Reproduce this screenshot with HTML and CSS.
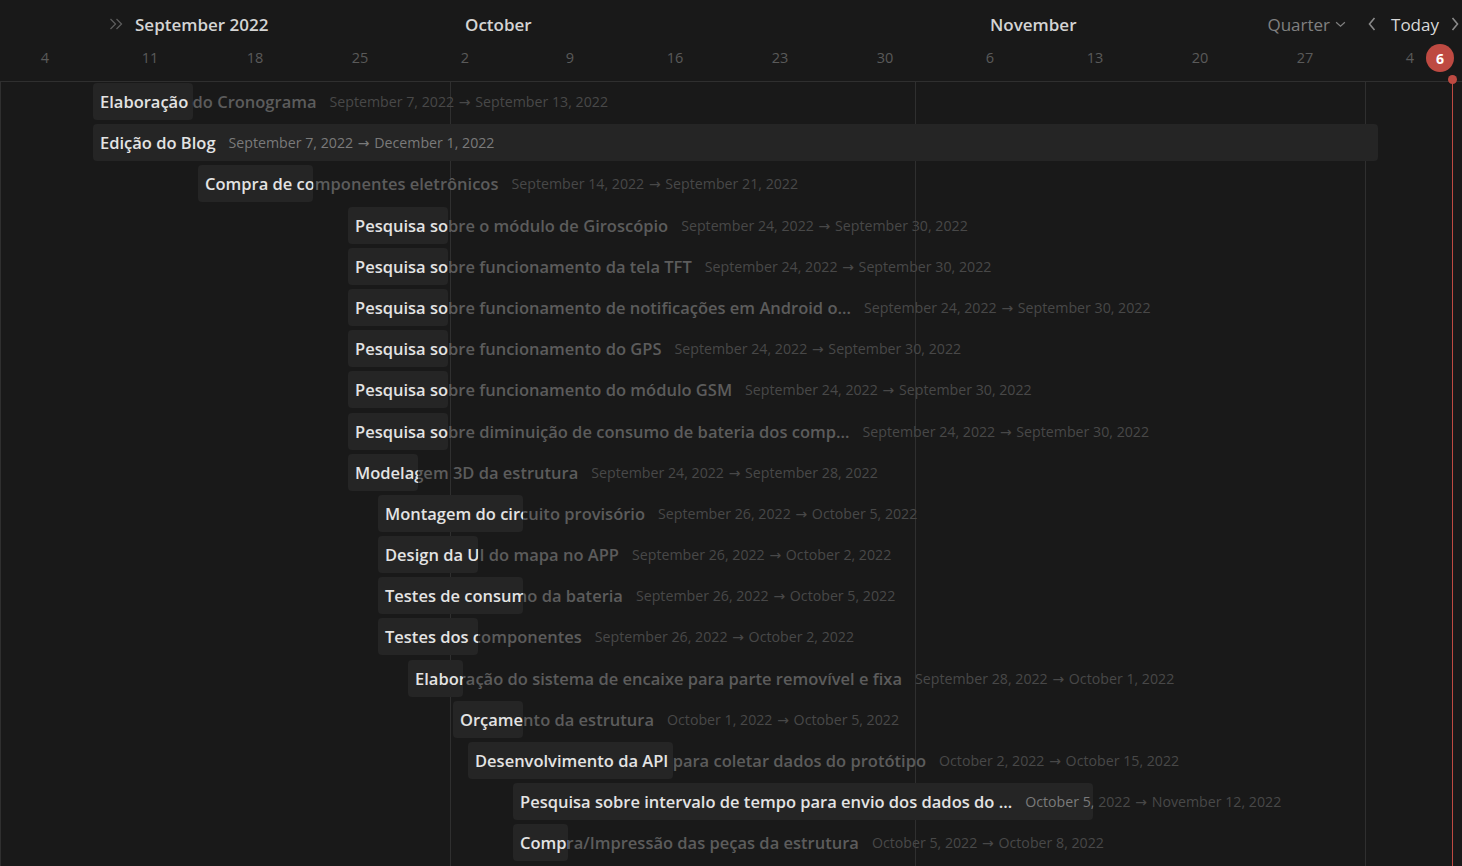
FILE: index.html
```html
<!DOCTYPE html>
<html lang="pt">
<head>
<meta charset="utf-8">
<title>Timeline</title>
<link rel="stylesheet" href="styles.css">
</head>
<body>
<div class="timeline">
  <div class="grid">
    <div class="month-col sep"></div>
    <div class="month-col oct"></div>
    <div class="month-col nov"></div>
    <div class="month-col dec"></div>
  </div>

  <header class="header">
    <div class="months">
      <div class="month m-sep">
        <svg class="dbl" viewBox="0 0 14 12" width="14" height="12"><path d="M1.5 1l5 5-5 5M7.5 1l5 5-5 5" fill="none" stroke="currentColor" stroke-width="1.3"/></svg>
        <span>September 2022</span>
      </div>
      <div class="month m-oct">October</div>
      <div class="month m-nov">November</div>
      <div class="controls">
        <span class="quarter">Quarter</span>
        <svg class="chev-down" viewBox="0 0 12 8" width="11" height="7"><path d="M1 1.5l5 4.5 5-4.5" fill="none" stroke="currentColor" stroke-width="1.4"/></svg>
        <svg class="nav prev" viewBox="0 0 8 14" width="8" height="14"><path d="M6.5 1L1.5 7l5 6" fill="none" stroke="currentColor" stroke-width="1.6"/></svg>
        <span class="today">Today</span>
        <svg class="nav next" viewBox="0 0 8 14" width="8" height="14"><path d="M1.5 1l5 6-5 6" fill="none" stroke="currentColor" stroke-width="1.6"/></svg>
      </div>
    </div>
    <div class="days">
      <span>4</span><span>11</span><span>18</span><span>25</span><span>2</span><span>9</span><span>16</span><span>23</span><span>30</span><span>6</span><span>13</span><span>20</span><span>27</span><span>4</span>
    </div>
    <div class="today-badge">6</div>
  </header>

  <div class="today-line"><span class="dot"></span></div>

  <div class="rows">
    <div class="row"><div class="item" style="margin-left:93px"><span class="title">Elaboração do Cronograma</span><span class="date">September 7, 2022 <span class="arrow">→</span> September 13, 2022</span><div class="bar" style="width:100px"><span class="title">Elaboração do Cronograma</span><span class="date">September 7, 2022 <span class="arrow">→</span> September 13, 2022</span></div></div></div>
    <div class="row"><div class="item" style="margin-left:93px"><span class="title">Edição do Blog</span><span class="date">September 7, 2022 <span class="arrow">→</span> December 1, 2022</span><div class="bar" style="width:1285px"><span class="title">Edição do Blog</span><span class="date">September 7, 2022 <span class="arrow">→</span> December 1, 2022</span></div></div></div>
    <div class="row"><div class="item" style="margin-left:198px"><span class="title">Compra de componentes eletrônicos</span><span class="date">September 14, 2022 <span class="arrow">→</span> September 21, 2022</span><div class="bar" style="width:115px"><span class="title">Compra de componentes eletrônicos</span><span class="date">September 14, 2022 <span class="arrow">→</span> September 21, 2022</span></div></div></div>
    <div class="row"><div class="item" style="margin-left:348px"><span class="title">Pesquisa sobre o módulo de Giroscópio</span><span class="date">September 24, 2022 <span class="arrow">→</span> September 30, 2022</span><div class="bar" style="width:100px"><span class="title">Pesquisa sobre o módulo de Giroscópio</span><span class="date">September 24, 2022 <span class="arrow">→</span> September 30, 2022</span></div></div></div>
    <div class="row"><div class="item" style="margin-left:348px"><span class="title">Pesquisa sobre funcionamento da tela TFT</span><span class="date">September 24, 2022 <span class="arrow">→</span> September 30, 2022</span><div class="bar" style="width:100px"><span class="title">Pesquisa sobre funcionamento da tela TFT</span><span class="date">September 24, 2022 <span class="arrow">→</span> September 30, 2022</span></div></div></div>
    <div class="row"><div class="item" style="margin-left:348px"><span class="title">Pesquisa sobre funcionamento de notificações em Android o…</span><span class="date">September 24, 2022 <span class="arrow">→</span> September 30, 2022</span><div class="bar" style="width:100px"><span class="title">Pesquisa sobre funcionamento de notificações em Android o…</span><span class="date">September 24, 2022 <span class="arrow">→</span> September 30, 2022</span></div></div></div>
    <div class="row"><div class="item" style="margin-left:348px"><span class="title">Pesquisa sobre funcionamento do GPS</span><span class="date">September 24, 2022 <span class="arrow">→</span> September 30, 2022</span><div class="bar" style="width:100px"><span class="title">Pesquisa sobre funcionamento do GPS</span><span class="date">September 24, 2022 <span class="arrow">→</span> September 30, 2022</span></div></div></div>
    <div class="row"><div class="item" style="margin-left:348px"><span class="title">Pesquisa sobre funcionamento do módulo GSM</span><span class="date">September 24, 2022 <span class="arrow">→</span> September 30, 2022</span><div class="bar" style="width:100px"><span class="title">Pesquisa sobre funcionamento do módulo GSM</span><span class="date">September 24, 2022 <span class="arrow">→</span> September 30, 2022</span></div></div></div>
    <div class="row"><div class="item" style="margin-left:348px"><span class="title">Pesquisa sobre diminuição de consumo de bateria dos comp…</span><span class="date">September 24, 2022 <span class="arrow">→</span> September 30, 2022</span><div class="bar" style="width:100px"><span class="title">Pesquisa sobre diminuição de consumo de bateria dos comp…</span><span class="date">September 24, 2022 <span class="arrow">→</span> September 30, 2022</span></div></div></div>
    <div class="row"><div class="item" style="margin-left:348px"><span class="title">Modelagem 3D da estrutura</span><span class="date">September 24, 2022 <span class="arrow">→</span> September 28, 2022</span><div class="bar" style="width:70px"><span class="title">Modelagem 3D da estrutura</span><span class="date">September 24, 2022 <span class="arrow">→</span> September 28, 2022</span></div></div></div>
    <div class="row"><div class="item" style="margin-left:378px"><span class="title">Montagem do circuito provisório</span><span class="date">September 26, 2022 <span class="arrow">→</span> October 5, 2022</span><div class="bar" style="width:145px"><span class="title">Montagem do circuito provisório</span><span class="date">September 26, 2022 <span class="arrow">→</span> October 5, 2022</span></div></div></div>
    <div class="row"><div class="item" style="margin-left:378px"><span class="title">Design da UI do mapa no APP</span><span class="date">September 26, 2022 <span class="arrow">→</span> October 2, 2022</span><div class="bar" style="width:100px"><span class="title">Design da UI do mapa no APP</span><span class="date">September 26, 2022 <span class="arrow">→</span> October 2, 2022</span></div></div></div>
    <div class="row"><div class="item" style="margin-left:378px"><span class="title">Testes de consumo da bateria</span><span class="date">September 26, 2022 <span class="arrow">→</span> October 5, 2022</span><div class="bar" style="width:145px"><span class="title">Testes de consumo da bateria</span><span class="date">September 26, 2022 <span class="arrow">→</span> October 5, 2022</span></div></div></div>
    <div class="row"><div class="item" style="margin-left:378px"><span class="title">Testes dos componentes</span><span class="date">September 26, 2022 <span class="arrow">→</span> October 2, 2022</span><div class="bar" style="width:100px"><span class="title">Testes dos componentes</span><span class="date">September 26, 2022 <span class="arrow">→</span> October 2, 2022</span></div></div></div>
    <div class="row"><div class="item" style="margin-left:408px"><span class="title">Elaboração do sistema de encaixe para parte removível e fixa</span><span class="date">September 28, 2022 <span class="arrow">→</span> October 1, 2022</span><div class="bar" style="width:55px"><span class="title">Elaboração do sistema de encaixe para parte removível e fixa</span><span class="date">September 28, 2022 <span class="arrow">→</span> October 1, 2022</span></div></div></div>
    <div class="row"><div class="item" style="margin-left:453px"><span class="title">Orçamento da estrutura</span><span class="date">October 1, 2022 <span class="arrow">→</span> October 5, 2022</span><div class="bar" style="width:70px"><span class="title">Orçamento da estrutura</span><span class="date">October 1, 2022 <span class="arrow">→</span> October 5, 2022</span></div></div></div>
    <div class="row"><div class="item" style="margin-left:468px"><span class="title">Desenvolvimento da API para coletar dados do protótipo</span><span class="date">October 2, 2022 <span class="arrow">→</span> October 15, 2022</span><div class="bar" style="width:205px"><span class="title">Desenvolvimento da API para coletar dados do protótipo</span><span class="date">October 2, 2022 <span class="arrow">→</span> October 15, 2022</span></div></div></div>
    <div class="row"><div class="item" style="margin-left:513px"><span class="title">Pesquisa sobre intervalo de tempo para envio dos dados do …</span><span class="date">October 5, 2022 <span class="arrow">→</span> November 12, 2022</span><div class="bar" style="width:580px"><span class="title">Pesquisa sobre intervalo de tempo para envio dos dados do …</span><span class="date">October 5, 2022 <span class="arrow">→</span> November 12, 2022</span></div></div></div>
    <div class="row"><div class="item" style="margin-left:513px"><span class="title">Compra/Impressão das peças da estrutura</span><span class="date">October 5, 2022 <span class="arrow">→</span> October 8, 2022</span><div class="bar" style="width:55px"><span class="title">Compra/Impressão das peças da estrutura</span><span class="date">October 5, 2022 <span class="arrow">→</span> October 8, 2022</span></div></div></div>
  </div>
</div>
</body>
</html>
```

FILE: styles.css
```css
* { box-sizing: border-box; }
html, body { margin: 0; padding: 0; background: #191919; }
body { font-family: "Open Sans", "Noto Sans", sans-serif; }

.timeline {
  position: relative;
  width: 1462px;
  height: 866px;
  overflow: hidden;
  background: #191919;
}

/* month grid lines */
.grid {
  position: absolute;
  top: 82px;
  left: 0;
  bottom: 0;
  display: flex;
}
.month-col { border-left: 1px solid #2f2f2f; height: 100%; }
.month-col.sep { width: 450px; }
.month-col.oct { width: 465px; }
.month-col.nov { width: 450px; }
.month-col.dec { width: 100px; }

.header {
  position: relative;
  height: 82px;
  border-bottom: 1px solid #2f2f2f;
}
.months {
  height: 48px;
  display: flex;
  align-items: center;
  color: #d4d4d4;
  font-size: 17px;
  font-weight: 600;
}
.month { white-space: nowrap; }
.m-sep { margin-left: 109px; width: 356px; display: flex; align-items: center; gap: 12px; }
.dbl { color: #5c5c5c; }
.m-oct { width: 525px; }
.m-nov { flex: 1; }
.controls {
  display: flex;
  align-items: center;
  font-weight: 400;
  margin-right: 3px;
}
.quarter { color: #808080; font-size: 17px; }
.chev-down { color: #808080; margin-left: 5px; margin-right: 22px; }
.nav { color: #8a8a8a; }
.today { color: #d8d8d8; font-size: 17px; margin: 0 12px 0 15px; }

.days {
  display: flex;
  margin-left: -7.5px;
  height: 18px;
  align-items: center;
  color: #5a5a5a;
  font-size: 14.5px;
}
.days span { width: 105px; flex: none; text-align: center; }

.today-badge {
  position: absolute;
  left: 1426px;
  top: 44px;
  width: 28px;
  height: 28px;
  border-radius: 50%;
  background: #be4a42;
  color: #fff;
  font-size: 14px;
  font-weight: 700;
  display: flex;
  align-items: center;
  justify-content: center;
}

.today-line {
  position: absolute;
  left: 1452px;
  top: 79px;
  bottom: 0;
  width: 1px;
  background: #be4a42;
}
.today-line .dot {
  position: absolute;
  left: -4px;
  top: -4px;
  width: 9px;
  height: 9px;
  border-radius: 50%;
  background: #be4a42;
}

.rows { position: relative; }
.row { height: 41.2px; padding-top: 1px; }
.item {
  position: relative;
  display: inline-flex;
  align-items: center;
  height: 37px;
  white-space: nowrap;
  padding-left: 7px;
}
.title {
  font-size: 16.5px;
  font-weight: 600;
  color: #5c5c5c;
}
.date {
  font-size: 14.2px;
  color: #484848;
  margin-left: 13px;
}
.arrow {
  font-family: "DejaVu Sans", sans-serif;
  font-size: 14px;
  margin: 0 1px;
}
.bar {
  position: absolute;
  top: 0;
  left: 0;
  height: 37px;
  background: #252525;
  border-radius: 4px;
  overflow: hidden;
  display: flex;
  align-items: center;
  padding-left: 7px;
  white-space: nowrap;
}
.bar .title { color: #e3e3e3; }
.bar .date { color: #7a7a7a; }
```
